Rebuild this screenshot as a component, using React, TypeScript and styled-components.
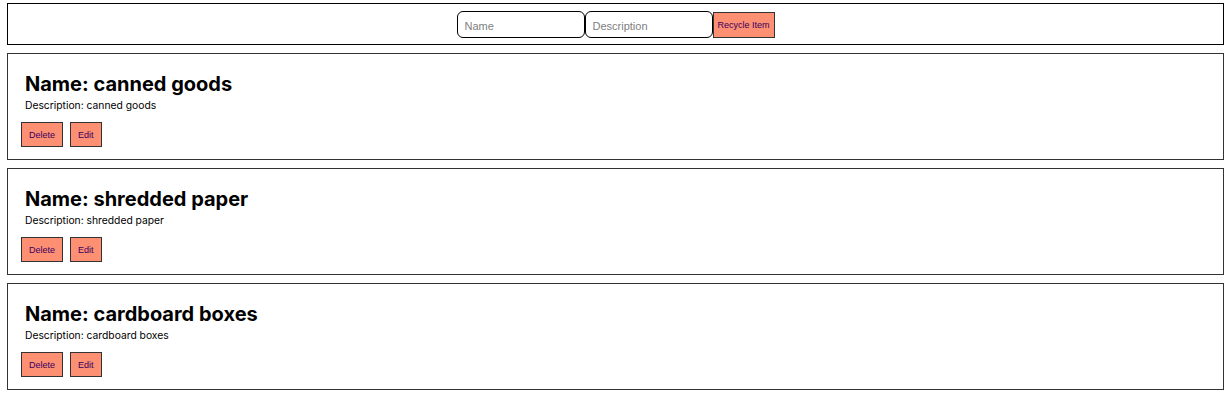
import React from "react";
import styled, { createGlobalStyle } from "styled-components";

const Global = createGlobalStyle`
  html, body { margin: 0; padding: 0; background: #fff; }
  body { font-family: Inter, "Noto Sans", sans-serif; color: #000; }
  * { box-sizing: border-box; }
`;

const Page = styled.div`
  padding: 3px 7px 0 7px;
  display: flex;
  flex-direction: column;
  gap: 8px;
`;

const Toolbar = styled.form`
  border: 1px solid #000;
  height: 42px;
  display: flex;
  justify-content: center;
  align-items: center;
`;

const Field = styled.input`
  width: 128px;
  height: 27px;
  margin: 1px 0 0 0;
  border: 1px solid #000;
  border-radius: 6px;
  padding: 2px 7px 0 7px;
  font-family: "Liberation Sans", Arial, sans-serif;
  font-size: 11px;
  color: #000;
  background: #fff;
  outline: none;
  &::placeholder { color: #808080; }
`;

const Button = styled.button`
  background: #fd8f72;
  border: 1px solid #333;
  color: #3a0060;
  font-family: "Liberation Sans", Arial, sans-serif;
  font-size: 9px;
  height: 25px;
  padding: 0 7px;
  margin: 0;
  cursor: pointer;
`;

const SubmitButton = styled(Button)`
  width: 62px;
  height: 26px;
  padding: 0;
  margin-top: 1px;
`;

const Card = styled.div`
  border: 1px solid #333;
  height: 107px;
  padding: 18px 13px 13px 13px;
  display: flex;
  flex-direction: column;
`;

const Title = styled.h2`
  margin: 0 0 3px 4px;
  font-size: 20px;
  line-height: 24px;
  font-weight: 700;
`;

const Desc = styled.p`
  margin: 0 0 10px 4px;
  font-size: 10.3px;
  line-height: 13px;
`;

const Actions = styled.div`
  display: flex;
  gap: 7px;
`;

const items = [
  { name: "canned goods", description: "canned goods" },
  { name: "shredded paper", description: "shredded paper" },
  { name: "cardboard boxes", description: "cardboard boxes" },
];

export default function App() {
  return (
    <>
      <Global />
      <Page>
        <Toolbar onSubmit={(e) => e.preventDefault()}>
          <Field placeholder="Name" />
          <Field placeholder="Description" />
          <SubmitButton type="submit">Recycle Item</SubmitButton>
        </Toolbar>
        {items.map((it) => (
          <Card key={it.name}>
            <Title>Name: {it.name}</Title>
            <Desc>Description: {it.description}</Desc>
            <Actions>
              <Button>Delete</Button>
              <Button>Edit</Button>
            </Actions>
          </Card>
        ))}
      </Page>
    </>
  );
}
